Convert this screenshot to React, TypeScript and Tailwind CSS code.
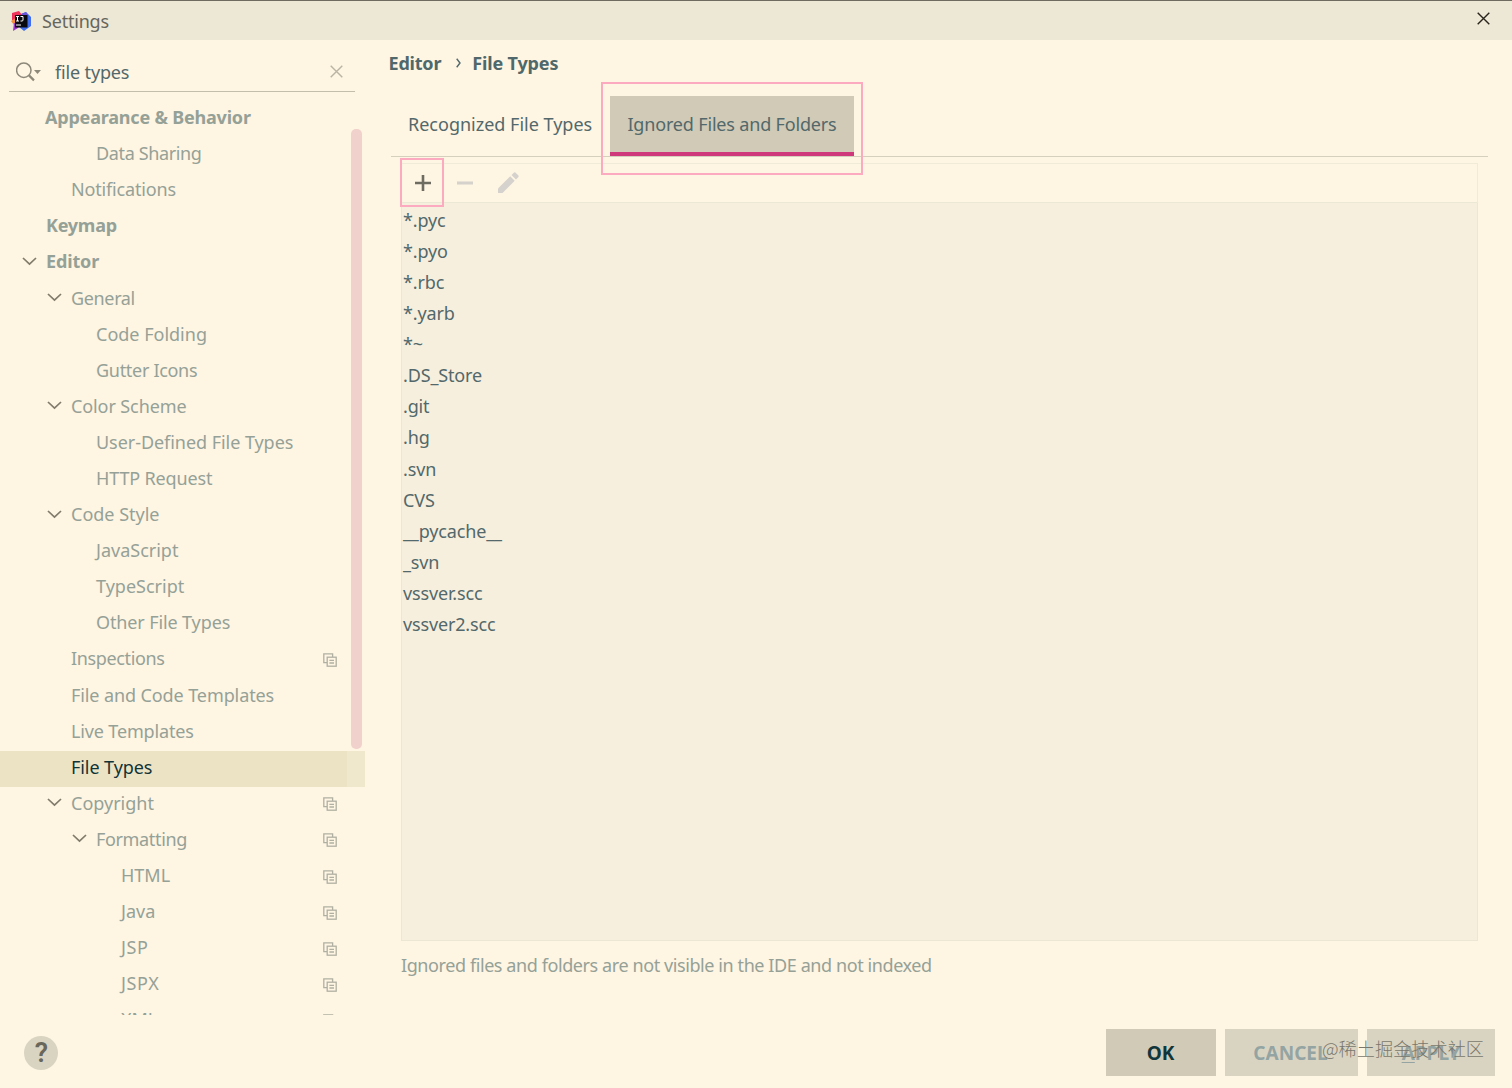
interface TreeItem {
  label: string;
  level: number;
  bold?: boolean;
  open?: boolean;
  copy?: boolean;
  selected?: boolean;
  tracking?: string;
}

const tree: TreeItem[] = [
  { label: "Appearance & Behavior", level: 0, bold: true, tracking: "tracking-[-0.2px] -ml-px" },
  { label: "Data Sharing", level: 2, tracking: "tracking-[-0.37px]" },
  { label: "Notifications", level: 1, tracking: "tracking-[-0.17px]" },
  { label: "Keymap", level: 0, bold: true, tracking: "tracking-[-0.25px]" },
  { label: "Editor", level: 0, bold: true, open: true, tracking: "tracking-[-0.15px]" },
  { label: "General", level: 1, open: true, tracking: "tracking-[-0.35px]" },
  { label: "Code Folding", level: 2 },
  { label: "Gutter Icons", level: 2, tracking: "tracking-[-0.3px]" },
  { label: "Color Scheme", level: 1, open: true, tracking: "tracking-[-0.1px]" },
  { label: "User-Defined File Types", level: 2, tracking: "tracking-[-0.05px]" },
  { label: "HTTP Request", level: 2, tracking: "tracking-[-0.15px]" },
  { label: "Code Style", level: 1, open: true },
  { label: "JavaScript", level: 2 },
  { label: "TypeScript", level: 2 },
  { label: "Other File Types", level: 2, tracking: "tracking-[-0.12px]" },
  { label: "Inspections", level: 1, copy: true, tracking: "tracking-[-0.35px]" },
  { label: "File and Code Templates", level: 1, tracking: "tracking-[-0.1px]" },
  { label: "Live Templates", level: 1, tracking: "tracking-[-0.15px]" },
  { label: "File Types", level: 1, selected: true, tracking: "tracking-[-0.08px]" },
  { label: "Copyright", level: 1, open: true, copy: true },
  { label: "Formatting", level: 2, open: true, copy: true, tracking: "tracking-[-0.35px]" },
  { label: "HTML", level: 3, copy: true },
  { label: "Java", level: 3, copy: true },
  { label: "JSP", level: 3, copy: true, tracking: "tracking-[0.6px]" },
  { label: "JSPX", level: 3, copy: true, tracking: "tracking-[0.6px]" },
  { label: "XML", level: 3, copy: true },
];

const ignored = [
  "*.pyc",
  "*.pyo",
  "*.rbc",
  "*.yarb",
  "*~",
  ".DS_Store",
  ".git",
  ".hg",
  ".svn",
  "CVS",
  "__pycache__",
  "_svn",
  "vssver.scc",
  "vssver2.scc",
];

const indent = ["pl-[21px]", "pl-[46px]", "pl-[71px]", "pl-[96px]"];

function AppLogo() {
  return (
    <svg width="20" height="20" viewBox="0 0 20 20">
      <path d="M1 2 L8 0 L11 4 L9 12 L1 9Z" fill="#f0325a" />
      <path d="M0 10 L5 7 L7 15 L3 14Z" fill="#f58a3c" />
      <path d="M3 12 L10 14 L7 17 L2 20Z" fill="#9a35c8" />
      <path d="M10 3 L15 1 L20 6 L20 15 L13 20 L8 16Z" fill="#3f6ff0" />
      <path d="M10 3 L15 1 L17 4 L14 6Z" fill="#6a55d8" />
      <rect x="4" y="4" width="12.5" height="12.5" fill="#080810" />
      <path
        d="M5 5.5h3M6.5 5.5v4.5M5 10h3M9.5 5.5h2.5v3.5q0 1-1 1h-1.5M5 14h5"
        fill="none"
        stroke="#fff"
        strokeWidth="1"
      />
    </svg>
  );
}

function Cross({ className }: { className: string }) {
  return (
    <svg width="13" height="13" viewBox="0 0 13 13" className={className}>
      <path d="M.7.7 12.3 12.3M12.3.7.7 12.3" fill="none" stroke="currentColor" strokeWidth="1.4" />
    </svg>
  );
}

function CopyIcon() {
  return (
    <svg width="14" height="14" viewBox="0 0 14 14" fill="none" stroke="#b0b0a2" strokeWidth="1.3">
      <path d="M4 9.6H.8V.8H9.6V4" />
      <rect x="4.2" y="4.2" width="9" height="9" />
      <path d="M6.4 7.3H11M6.4 10H11" />
    </svg>
  );
}

function TreeRow({ item }: { item: TreeItem }) {
  const color = item.selected ? "text-[#103338]" : "text-[#95a197]";
  return (
    <div
      className={`flex h-[36.1px] shrink-0 items-center ${indent[item.level]} ${
        item.selected ? "bg-gradient-to-r from-[#ece3c4] from-95% to-[#f0e8cc] to-95%" : ""
      }`}
    >
      <div className="w-[25px] shrink-0 pb-[5px]">
        {item.open && (
          <svg width="15" height="9" viewBox="0 0 15 9" className="ml-px">
            <path d="M1 1 7.5 7.2 14 1" fill="none" stroke="#817b6b" strokeWidth="1.7" />
          </svg>
        )}
      </div>
      <span
        className={`whitespace-nowrap pb-[5px] ${color} ${item.bold ? "font-bold" : ""} ${item.tracking ?? ""}`}
      >
        {item.label}
      </span>
      {item.copy && (
        <div className="ml-auto mr-[28px] pb-[2px]">
          <CopyIcon />
        </div>
      )}
    </div>
  );
}

function Sidebar() {
  return (
    <aside className="relative flex w-[365px] shrink-0 flex-col">
      <div className="ml-[9px] mt-3 flex h-10 w-[346px] items-center border-b border-[#c3beab] pl-[7px] pr-3">
        <svg width="26" height="20" viewBox="0 0 26 20" fill="none" stroke="#8c887a">
          <circle cx="7.8" cy="8.2" r="7.2" strokeWidth="1.5" />
          <path d="M13 13.4 18 18.4" strokeWidth="2.2" />
          <path d="M18 8H25L21.5 12Z" fill="#8c887a" stroke="none" />
        </svg>
        <span className="ml-[13px] tracking-[-0.15px] text-[#52686b]">file types</span>
        <Cross className="ml-auto text-[#b9b4a3]" />
      </div>
      <div className="mt-[9.5px] flex h-[913.5px] flex-col overflow-hidden">
        {tree.map((item) => (
          <TreeRow key={item.label} item={item} />
        ))}
      </div>
      <div className="absolute left-[351px] top-[89px] h-[620px] w-[11px] rounded-[5px] bg-[#f1d1cb]" />
    </aside>
  );
}

function Toolbar() {
  return (
    <div className="flex h-10 items-center border border-b-[#ece8d6] border-[#f0ebd9] pl-[13px]">
      <svg width="16" height="16" viewBox="0 0 16 16">
        <path d="M8 0V16M0 8H16" stroke="#6e6c61" strokeWidth="2.6" />
      </svg>
      <svg width="16" height="16" viewBox="0 0 16 16" className="ml-[26px]">
        <path d="M0 8H16" stroke="#d5d1cb" strokeWidth="3" />
      </svg>
      <svg width="21" height="21" viewBox="0 0 22 22" fill="#d5d1cc" className="mb-px ml-[25px]">
        <path d="M0 22V17.3L12.8 4.5 17.5 9.2 4.7 22Z" />
        <path d="M14.2 3.1 16.8.5Q17.5 0 18.2.5L21.4 3.7Q22 4.5 21.4 5.2L18.8 7.8Z" />
      </svg>
    </div>
  );
}

function Main() {
  return (
    <main className="relative flex grow flex-col">
      <div className="flex h-[46px] items-center pl-[23.5px] font-bold text-[#4e686b]">
        <span className="tracking-[-0.2px]">Editor</span>
        <svg width="5" height="10" viewBox="0 0 5 10" className="ml-[15px] mr-[11px]">
          <path d="M.7.7 4 5 .7 9.3" fill="none" stroke="#52686b" strokeWidth="1.4" />
        </svg>
        <span className="tracking-[-0.15px]">File Types</span>
      </div>
      <div className="ml-[26px] mr-6 mt-2.5 flex h-[61px] border-b border-[#d4d0bd] pl-[17px] text-[#52686b]">
        <div className="flex h-[56px] w-[202px] items-center">
          <span className="whitespace-nowrap">Recognized File Types</span>
        </div>
        <div className="flex h-[60px] w-[244px] justify-center border-b-4 border-[#cf387a] bg-[#d1cab6]">
          <span className="whitespace-nowrap leading-[56px] tracking-[-0.17px]">
            Ignored Files and Folders
          </span>
        </div>
      </div>
      <div className="ml-9 mr-[34px] mt-1.5">
        <Toolbar />
        <ul className="h-[738px] border border-t-0 border-[#ebe7d4] bg-[#f6efdd] pl-px pt-[1.8px] tracking-[-0.15px] text-[#52686b]">
          {ignored.map((name) => (
            <li key={name} className="h-[31.1px] leading-[31.1px]">
              {name}
            </li>
          ))}
        </ul>
        <p className="mt-3 tracking-[-0.41px] text-[#95a197]">
          Ignored files and folders are not visible in the IDE and not indexed
        </p>
      </div>
      <div className="absolute left-[236px] top-[42px] h-[93px] w-[262px] border-2 border-[#fbaac0]" />
      <div className="absolute left-[35px] top-[118px] h-[49px] w-[44px] border-2 border-[#fbaac0]" />
    </main>
  );
}

export default function App() {
  return (
    <div className="relative flex h-[1088px] w-[1512px] flex-col overflow-hidden bg-[#fef5e3] font-['Noto_Sans','Open_Sans',sans-serif] text-[18px] leading-6">
      <header className="flex h-10 shrink-0 items-center border-t border-[#706b60] bg-[#ede7d6] pl-[11px] pr-[22px]">
        <AppLogo />
        <span className="ml-[11px] tracking-[-0.2px] text-[#66665d]">Settings</span>
        <Cross className="mb-1 ml-auto text-[#29251b]" />
      </header>
      <div className="flex h-[975px] shrink-0">
        <Sidebar />
        <Main />
      </div>
      <footer className="flex grow items-center gap-[9px] pb-px pl-6 pr-[17px] pt-[3px] text-[19px] font-bold">
        <div className="mr-auto flex size-[34px] items-center justify-center rounded-full bg-[#d9d4c2] pl-px font-['Roboto',sans-serif] text-[27px] font-semibold text-[#69675b]">
          ?
        </div>
        <button className="h-[47px] w-[110px] bg-[#d1cab7] pr-px text-[#10363b]">OK</button>
        <button className="h-[47px] w-[133px] bg-[#d9d4c2] pr-0.5 text-[#94a4a2]">CANCEL</button>
        <button className="h-[47px] w-[128px] bg-[#d9d4c2] text-[#94a4a2]">
          <span className="underline decoration-1 underline-offset-2">A</span>PPLY
        </button>
      </footer>
      <div className="absolute left-[1322px] top-[1036px] whitespace-nowrap font-['Noto_Sans_CJK_SC',sans-serif] text-[18.2px] font-light text-[#79776d]">
        @稀土掘金技术社区
      </div>
    </div>
  );
}
